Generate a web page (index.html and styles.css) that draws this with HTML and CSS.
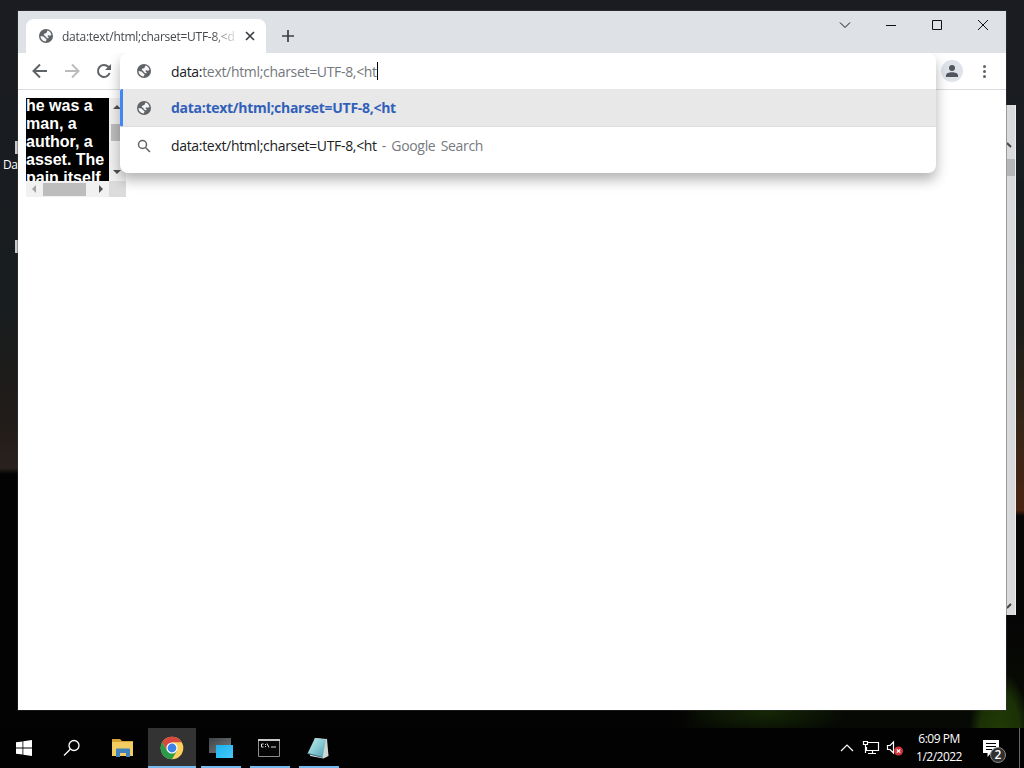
FILE: index.html
```html
<!DOCTYPE html>
<html lang="en">
<head>
  <meta charset="UTF-8">
  <meta name="viewport" content="width=device-width, initial-scale=1">
  <title>Desktop</title>
  <link rel="stylesheet" href="styles.css">
</head>
<body>
  <svg class="defs" width="0" height="0">
    <symbol id="globe" viewBox="0 0 18 18">
      <circle cx="9" cy="9" r="7"/>
      <path class="land" d="M10.5 3.600C12.500 4.200 14 5.700 14.400 7.900L13 8.800L11.300 8.300L10.300 9.300L11.800 10.300L11 11.400L9.200 10.400L8 8.700L6.600 8L7.400 6.500L9.200 6.300zM3.500 8.900L6.500 9.600L8.300 11.200L9.600 12.400L8.800 14.400C5.800 14.200 3.500 12 3.500 8.900z"/>
    </symbol>
  </svg>

  <div class="desktop">
    <div class="hill"></div>
    <div class="grass"></div>
    <div class="shortcut shortcut-1"><i></i><span>Da</span></div>
    <div class="shortcut shortcut-2"><i></i></div>

    <div class="back-window">
      <svg width="10" height="10" viewBox="0 0 10 10"><path d="M0 2l4 4"/></svg>
      <div class="back-thumb"></div>
      <svg class="back-down" width="10" height="10" viewBox="0 0 10 10"><path d="M0 6l4-4"/></svg>
    </div>

    <div class="window">
      <div class="tabstrip">
        <div class="tab">
          <svg class="globe" width="18" height="18"><use href="#globe"/></svg>
          <span class="tab-title">data:text/html;charset=UTF-8,&lt;d</span>
          <svg class="tab-close" width="10" height="10" viewBox="0 0 10 10"><path d="M1 1l8 8M9 1L1 9"/></svg>
        </div>
        <svg class="new-tab" width="12" height="12" viewBox="0 0 12 12"><path d="M6 0v12M0 6h12"/></svg>
        <div class="controls">
          <svg width="12" height="12" viewBox="0 0 12 12"><path d="M1 3.5l5 5 5-5"/></svg>
          <svg width="12" height="12" viewBox="0 0 12 12"><path d="M1 6.5h10"/></svg>
          <svg width="12" height="12" viewBox="0 0 12 12"><path d="M1.5 1.5h9v9h-9z"/></svg>
          <svg width="12" height="12" viewBox="0 0 12 12"><path d="M1 1l10 10M11 1L1 11"/></svg>
        </div>
      </div>

      <div class="toolbar">
        <svg width="16" height="16" viewBox="0 0 16 16"><path d="M15 8H2M8 1.5L1.5 8 8 14.5"/></svg>
        <svg class="off" width="16" height="16" viewBox="0 0 16 16"><path d="M1 8h13M8 1.5L14.5 8 8 14.5"/></svg>
        <svg width="16" height="16" viewBox="0 0 16 16"><path d="M13.6 10A6 6 0 1 1 12.3 3.8L14 5.5"/><path class="solid" d="M15 1v6H9z"/></svg>
        <div class="toolbar-right">
          <div class="avatar">
            <svg width="14" height="14" viewBox="0 0 14 14"><circle cx="7" cy="4" r="3"/><path d="M1 13v-1.5C1 9.5 4 8.3 7 8.3s6 1.2 6 3.2V13z"/></svg>
          </div>
          <div class="dots"><i></i><i></i><i></i></div>
        </div>
      </div>

      <div class="page">
        <div class="frame">
          <div class="frame-text">he was a man, a author, a asset. The pain itself</div>
          <div class="vbar"><i class="up"></i><b></b><i class="down"></i></div>
          <div class="hbar"><i class="left"></i><b></b><i class="right"></i></div>
          <div class="corner"></div>
        </div>
      </div>

      <div class="omnibox">
        <div class="row typed">
          <svg class="globe" width="18" height="18"><use href="#globe"/></svg>
          <span class="url"><em>data:</em>text/html;charset=UTF-8,&lt;ht</span><span class="caret"></span>
        </div>
        <div class="row selected">
          <svg class="globe" width="18" height="18"><use href="#globe"/></svg>
          <span class="match">data:text/html;charset=UTF-8,&lt;ht</span>
        </div>
        <div class="row">
          <svg class="search" width="18" height="18" viewBox="0 0 18 18"><circle cx="7.5" cy="7.5" r="4"/><path d="M10.5 10.5l4.5 4.5"/></svg>
          <span class="query">data:text/html;charset=UTF-8,&lt;ht</span>
          <span class="hint">- Google Search</span>
        </div>
      </div>
    </div>

    <div class="taskbar">
      <div class="task start">
        <svg width="16" height="16" viewBox="0 0 16 16"><path d="M0 2.3L6.5 1.4v6.1H0zM7.3 1.3L16 0v7.5H7.3zM0 8.4h6.5v6.2L0 13.7zM7.3 8.4H16V16l-8.7-1.3z"/></svg>
      </div>
      <div class="task find">
        <svg width="18" height="18" viewBox="0 0 18 18"><circle cx="11" cy="6.5" r="5"/><path d="M7.3 10.2L1 16.5"/></svg>
      </div>
      <div class="task files">
        <svg width="22" height="20" viewBox="0 0 22 20">
          <path fill="#d9a334" d="M0 1h8l2 2h11v5H0z"/>
          <path fill="#f3cd62" d="M0 4h21v14H0z"/>
          <path fill="#3e83bd" d="M4 19v-7.5a1 1 0 0 1 1-1h12a1 1 0 0 1 1 1V19h-4v-4H8v4z"/>
        </svg>
      </div>
      <div class="task chrome active">
        <svg width="24" height="24" viewBox="0 0 24 24">
          <circle cx="12" cy="12" r="11.3" fill="#fcd05a"/>
          <path fill="#d9483f" d="M2.2 6.35A11.3 11.3 0 0 1 21.8 6.35H12L7.1 14.8z"/>
          <path fill="#2a9a4b" d="M2.2 6.35A11.3 11.3 0 0 0 12 23.3L16.9 14.8 12 17.6 7.1 14.8z"/>
          <circle cx="12" cy="12" r="5.6" fill="#fff"/>
          <circle cx="12" cy="12" r="4.4" fill="#3b82ea"/>
        </svg>
      </div>
      <div class="task open">
        <svg width="24" height="22" viewBox="0 0 24 22">
          <defs>
            <linearGradient id="gray" x2="1" y2="1"><stop stop-color="#3d4347"/><stop offset="1" stop-color="#777d80"/></linearGradient>
            <linearGradient id="cyan" x2="1" y2="1"><stop stop-color="#1cb2ee"/><stop offset="1" stop-color="#45c8fa"/></linearGradient>
          </defs>
          <path fill="url(#gray)" d="M0 1h22v15H0z"/>
          <path fill="url(#cyan)" d="M7 8h17v13H7z"/>
        </svg>
      </div>
      <div class="task open cmd">
        <svg width="22" height="20" viewBox="0 0 22 20">
          <path fill="#050505" stroke="#8d8d8d" d="M.5 1.5h21v17H.5z"/>
          <path fill="#c9c9c9" d="M0 1h22v2H0z"/>
          <path fill="none" stroke="#ddd" d="M5.5 6H3.5v3h2M7.5 6v1M7.5 8v1M9 5.5l2 4M13 9h5"/>
        </svg>
      </div>
      <div class="task open pad">
        <svg width="24" height="24" viewBox="0 0 24 24">
          <defs>
            <linearGradient id="cover" x2="1" y2="1"><stop stop-color="#c5eaec"/><stop offset=".5" stop-color="#8acbd4"/><stop offset="1" stop-color="#4d9caf"/></linearGradient>
          </defs>
          <path fill="#cfd6d3" d="M9 2l12 1 1.5 17-5 2.5L4 20z"/>
          <path fill="url(#cover)" d="M9 2l11 1.5-3.5 18L1.5 17.5z"/>
          <path fill="none" stroke="#3b7280" d="M1.500 17.500l14.800 3.700"/>
        </svg>
      </div>

      <div class="tray">
        <svg class="line" width="14" height="14" viewBox="0 0 14 14"><path d="M1 10l6-6 6 6"/></svg>
        <svg class="line network" width="18" height="16" viewBox="0 0 18 16"><path d="M5 2.5h11.5v8H4.5V7M1.5 1.5h4v3h-4zM3.5 5v8M10.5 11v2.5M6 13.5h8"/></svg>
        <svg class="line sound" width="18" height="16" viewBox="0 0 18 16"><path d="M1.5 5.5H4L7.5 2v11L4 9.5H1.5z"/><circle cx="12.5" cy="11" r="4.5"/><path class="mute" d="M10.8 9.3l3.4 3.4M14.2 9.3l-3.4 3.4"/></svg>
        <div class="clock"><span>6:09 PM</span><span>1/2/2022</span></div>
        <div class="notes">
          <svg width="16" height="17" viewBox="0 0 16 17"><path fill="#fff" d="M0 0h16v13H8l-3.5 4v-4H0z"/><path stroke="#000" d="M3 3.5h10M3 6.5h10M3 9.5h6"/></svg>
          <span class="count">2</span>
        </div>
        <div class="peek"></div>
      </div>
    </div>
  </div>
</body>
</html>
```

FILE: styles.css
```css
* {
  margin: 0;
  padding: 0;
  box-sizing: border-box;
}
body {
  font-family: "Open Sans", "Noto Sans", sans-serif;
  overflow: hidden;
}
svg {
  display: block;
  flex: none;
}
.defs {
  position: absolute;
}
.desktop {
  position: relative;
  width: 1024px;
  height: 768px;
  overflow: hidden;
  background: linear-gradient(#1b1c22 0, #191c20 150px, #181d1f 300px, #211c19 420px, #29211d 468px, #030303 474px, #030303 100%);
}

/* wallpaper */
.hill {
  position: absolute;
  right: 0;
  top: 180px;
  width: 18px;
  height: 548px;
  background: linear-gradient(#161b1e 0, #1d1d1a 150px, #352617 240px, #4a2412 330px, #080706 336px, #050505 440px, #080d04 100%);
}
.grass {
  position: absolute;
  left: 670px;
  top: 665px;
  width: 354px;
  height: 63px;
  background: radial-gradient(ellipse 34px 70px at 330px 70px, #213b05 0, #1b3006 60%, transparent 90%), radial-gradient(ellipse 80px 22px at 95px 48px, #152706, transparent), linear-gradient(90deg, transparent, #070a04 30px);
}
.shortcut {
  position: absolute;
  color: #fff;
  font-size: 12px;
}
.shortcut i {
  display: block;
  width: 3px;
  height: 13px;
  margin-left: 15px;
  background: #c9c9c9;
}
.shortcut span {
  display: block;
  padding: 2px 0 0 3px;
  letter-spacing: -0.5px;
}
.shortcut-1 {
  top: 141px;
  left: 0;
}
.shortcut-2 {
  top: 240px;
  left: 0;
}
.back-window {
  position: absolute;
  left: 996px;
  top: 105px;
  width: 20px;
  height: 510px;
  padding: 36px 0 3px 11px;
  display: flex;
  flex-direction: column;
  background: #d9dadb;
  border-right: 1px solid #eee;
}
.back-window path {
  fill: none;
  stroke: #444;
  stroke-width: 2;
}
.back-thumb {
  width: 8px;
  height: 17px;
  margin-top: 8px;
  background: #b5b6b6;
}
.back-down {
  margin-top: auto;
}

/* browser */
.window {
  position: absolute;
  left: 18px;
  top: 11px;
  width: 988px;
  height: 699px;
  display: flex;
  flex-direction: column;
  background: #fff;
  box-shadow: 0 0 0 1px rgba(60, 60, 60, 0.4);
}
.tabstrip {
  height: 42px;
  display: flex;
  padding: 8px 0 0 8px;
  background: #dee1e6;
}
.tab {
  width: 240px;
  display: flex;
  align-items: center;
  padding: 0 11px;
  background: #fff;
  border-radius: 8px 8px 0 0;
}
.globe {
  fill: #5f6368;
}
.land {
  fill: #f6f6f6;
}
.tab-title {
  width: 174px;
  margin-left: 7px;
  overflow: hidden;
  white-space: nowrap;
  font-size: 12px;
  letter-spacing: -0.27px;
  color: #45484c;
  -webkit-mask-image: linear-gradient(90deg, #000 150px, transparent 178px);
}
.tab-close {
  margin-left: 9px;
}
.tab-close path,
.new-tab path {
  stroke: #3c4043;
  stroke-width: 1.7;
}
.new-tab {
  margin: 11px 0 0 16px;
}
.controls {
  display: flex;
  gap: 34px;
  margin: 0 17px 0 auto;
}
.controls path {
  fill: none;
  stroke: #111;
}
.toolbar {
  height: 37px;
  display: flex;
  align-items: center;
  gap: 16px;
  padding-left: 14px;
  border-bottom: 1px solid #dadce0;
}
.toolbar path {
  fill: none;
  stroke: #5f6368;
  stroke-width: 2;
}
.toolbar .off path {
  stroke: #babcbe;
}
.toolbar .solid {
  fill: #5f6368;
  stroke: none;
}
.toolbar-right {
  display: flex;
  align-items: center;
  gap: 20px;
  margin: 0 20px 0 auto;
}
.avatar {
  width: 22px;
  height: 22px;
  display: flex;
  align-items: center;
  justify-content: center;
  border-radius: 50%;
  background: #dee3ea;
}
.toolbar .avatar circle,
.toolbar .avatar path {
  fill: #505660;
  stroke: none;
}
.dots {
  display: grid;
  gap: 2px;
}
.dots i {
  width: 3px;
  height: 3px;
  border-radius: 50%;
  background: #5f6368;
}

/* small iframe */
.page {
  flex: 1;
  padding: 8px;
}
.frame {
  width: 100px;
  height: 99px;
  display: grid;
  grid-template: 83px 16px / 83px 17px;
}
.frame-text {
  overflow: hidden;
  background: #000;
  color: #fff;
  font: bold 16px/18px "Liberation Sans", Arial, sans-serif;
}
.frame-text::before {
  content: "";
  display: block;
  margin-top: -1px;
}
.vbar,
.hbar {
  display: flex;
  align-items: center;
  justify-content: space-between;
  background: #f1f1f1;
}
.vbar {
  flex-direction: column;
  padding: 7px 1px 7px 0;
}
.vbar b {
  width: 12px;
  height: 17px;
  margin-bottom: 14px;
  background: #bdbdbd;
}
.hbar {
  padding: 0 6px;
}
.hbar b {
  width: 43px;
  height: 13px;
  margin-right: 7px;
  background: #bdbdbd;
}
.frame i {
  border: 4px solid transparent;
}
.frame .up {
  border-top: 0;
  border-bottom-color: #505050;
}
.frame .down {
  border-bottom: 0;
  border-top-color: #505050;
}
.frame .left {
  border-left: 0;
  border-right-color: #a3a3a3;
}
.frame .right {
  border-right: 0;
  border-left-color: #505050;
}
.corner {
  background: #dcdcdc;
}

/* address bar popup, covers the toolbar and the page */
.omnibox {
  position: absolute;
  left: 102px;
  top: 42px;
  width: 816px;
  height: 120px;
  background: #fff;
  border-radius: 8px;
  box-shadow: 0 7px 13px rgba(0, 0, 0, 0.3);
  clip-path: inset(0 -20px -30px -20px);
  font-size: 14px;
}
.row {
  height: 37px;
  display: flex;
  align-items: center;
  padding-left: 15px;
  white-space: nowrap;
}
.typed {
  height: 36px;
}
.row span {
  letter-spacing: -0.32px;
}
.row .url,
.row .match,
.row .query {
  margin-left: 18px;
}
.url {
  color: #73777b;
}
.url em {
  font-style: normal;
  color: #202124;
}
.caret {
  width: 1px;
  height: 18px;
  background: #000;
}
.selected {
  height: 38px;
  padding-left: 12px;
  background: #e8e8e9;
  border-left: 3px solid #4285f4;
  border-bottom: 1px solid #dcdddd;
  border-radius: 2px 0 0 2px;
}
.row .match {
  font-weight: bold;
  letter-spacing: -0.29px;
  color: #3160b9;
}
.query {
  color: #202124;
}
.row .hint {
  margin-left: 5px;
  word-spacing: 2px;
  color: #767a7e;
}
.search {
  fill: none;
  stroke: #5f6368;
  stroke-width: 1.5;
}

/* taskbar */
.taskbar {
  position: absolute;
  left: 0;
  right: 0;
  bottom: 0;
  height: 40px;
  display: flex;
  background: #020202;
}
.task {
  width: 48px;
  display: flex;
  align-items: center;
  justify-content: center;
}
.start path {
  fill: #fff;
}
.find svg {
  fill: none;
  stroke: #fff;
  stroke-width: 1.3;
}
.files {
  margin-left: 2px;
  padding-left: 2px;
}
.chrome {
  margin-left: 2px;
}
.active {
  padding-top: 2px;
  background: #333;
  border-bottom: 2px solid #76b9ed;
}
.open {
  width: 40px;
  margin: 0 4px 0 5px;
  padding-top: 2px;
  border-bottom: 2px solid #76b9ed;
}
.cmd,
.pad {
  padding-right: 2px;
}
.tray {
  display: flex;
  align-items: center;
  margin-left: auto;
  color: #fff;
}
.line {
  fill: none;
  stroke: #fff;
  stroke-width: 1.2;
}
.network {
  margin-left: 8px;
}
.sound {
  margin-left: 6px;
}
.sound circle {
  fill: #d2353e;
  stroke: none;
}
.clock {
  width: 50px;
  margin-left: 10px;
  display: flex;
  flex-direction: column;
  align-items: center;
  font-size: 12px;
  line-height: 18px;
  letter-spacing: -0.5px;
  white-space: nowrap;
}
.notes {
  position: relative;
  margin-left: 19px;
}
.count {
  position: absolute;
  left: 7px;
  top: 7px;
  width: 16px;
  height: 16px;
  border: 1px solid #8b8b8b;
  border-radius: 50%;
  background: #303030;
  font-size: 12px;
  line-height: 14px;
  font-weight: 600;
  text-align: center;
}
.peek {
  width: 5px;
  height: 40px;
  margin-left: 20px;
  border-left: 1px solid #666;
}
```
